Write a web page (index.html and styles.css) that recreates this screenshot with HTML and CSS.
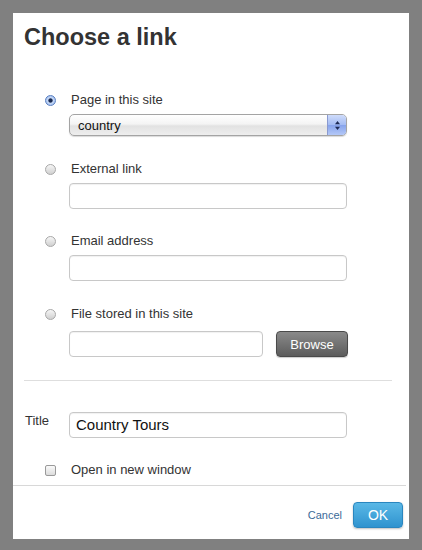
FILE: index.html
```html
<!DOCTYPE html>
<html>
<head>
<meta charset="utf-8">
<link rel="stylesheet" href="styles.css">
</head>
<body>
<div class="panel">
  <div class="content">
    <h1 class="title">Choose a link</h1>
    <div class="options">
      <div class="option">
        <label class="opt-label"><span class="radio checked"></span>Page in this site</label>
        <div class="select">
          <span class="select-value">country</span>
          <span class="select-arrows">
            <svg width="7" height="11" viewBox="0 0 7 11"><path d="M3.5 1 L6 4.2 H1 Z" fill="#1d2a55"/><path d="M3.5 10 L6 6.8 H1 Z" fill="#1d2a55"/></svg>
          </span>
        </div>
      </div>
      <div class="option">
        <label class="opt-label"><span class="radio"></span>External link</label>
        <div class="input"></div>
      </div>
      <div class="option">
        <label class="opt-label"><span class="radio"></span>Email address</label>
        <div class="input"></div>
      </div>
      <div class="option">
        <label class="opt-label"><span class="radio"></span>File stored in this site</label>
        <div class="file-row">
          <div class="input file-input"></div>
          <button class="browse">Browse</button>
        </div>
      </div>
    </div>
    <div class="divider"></div>
    <div class="title-row">
      <span class="title-label">Title</span>
      <div class="input title-input">Country Tours</div>
    </div>
    <label class="check-row"><span class="checkbox"></span>Open in new window</label>
  </div>
  <div class="footer">
    <a class="cancel">Cancel</a>
    <button class="ok">OK</button>
  </div>
</div>
</body>
</html>
```
FILE: styles.css
```css
html, body {
  margin: 0;
  padding: 0;
  background: #808080;
}
body {
  width: 422px;
  height: 550px;
  overflow: hidden;
  font-family: "Liberation Sans", Arial, sans-serif;
  color: #333;
}
.panel {
  margin: 13px 0 0 13px;
  width: 396px;
  height: 526px;
  background: #fff;
  display: flex;
  flex-direction: column;
}
.content {
  height: 473px;
  border-bottom: 1px solid #d8d8d8;
  width: 393px;
  box-sizing: border-box;
}
.title {
  margin: 10px 0 0 11px;
  font-size: 23.5px;
  line-height: 28px;
  font-weight: bold;
  color: #333;
}
.options {
  margin-top: 41px;
  display: flex;
  flex-direction: column;
  gap: 25px;
}
.option {
  display: flex;
  flex-direction: column;
  gap: 6px;
}
.opt-label {
  display: flex;
  align-items: center;
  font-size: 13px;
  line-height: 16px;
  padding-left: 32px;
  color: #333;
}
.radio {
  width: 11px;
  height: 11px;
  border-radius: 50%;
  border: 1px solid #a8a8a8;
  background: linear-gradient(#f6f6f6, #d0d0d0);
  margin-right: 15px;
  box-sizing: border-box;
  flex: none;
}
.radio.checked {
  border-color: #5a7fc0;
  background: radial-gradient(circle, #1a2a50 0, #1a2a50 1.7px, #c8daf7 2.6px, #8cb0ec 100%);
}
.select {
  margin-left: 56px;
  width: 278px;
  height: 22px;
  box-sizing: border-box;
  border: 1px solid #a4a4a4;
  border-radius: 5px;
  background: linear-gradient(#ffffff, #f4f4f4 45%, #e2e2e2 55%, #eeeeee);
  box-shadow: 0 1px 1px rgba(0,0,0,0.15);
  display: flex;
  align-items: center;
  justify-content: space-between;
  overflow: hidden;
}
.select-value {
  font-size: 13px;
  padding-left: 8px;
  color: #111;
}
.select-arrows {
  width: 18px;
  height: 100%;
  background: linear-gradient(#cfdcfb, #a3bbf3 50%, #86a3ec 51%, #b4c8f7);
  border-left: 1px solid #8a9ad0;
  display: flex;
  align-items: center;
  justify-content: center;
}
.input {
  margin-left: 56px;
  width: 278px;
  height: 26px;
  box-sizing: border-box;
  border: 1px solid #c8c8c8;
  border-radius: 4px;
  background: #fff;
  box-shadow: inset 0 1px 1px rgba(0,0,0,0.06);
}
.option:nth-child(3) { margin-top: -1px; }
.file-row {
  margin-left: 56px;
  margin-top: 3px;
  display: flex;
  gap: 13px;
}
.file-input {
  margin-left: 0;
  width: 194px;
}
.browse {
  width: 72px;
  height: 26px;
  border: 1px solid #4a4a4a;
  border-radius: 4px;
  background: linear-gradient(#8a8a8a, #5c5c5c);
  color: #fff;
  font-family: "Liberation Sans", Arial, sans-serif;
  font-size: 13px;
  padding: 0;
  box-shadow: 0 1px 1px rgba(0,0,0,0.2);
}
.divider {
  margin: 23px 0 0 11px;
  width: 368px;
  height: 1px;
  background: #dedede;
}
.title-row {
  margin-top: 31px;
  display: flex;
  align-items: flex-start;
}
.title-label {
  font-size: 13px;
  line-height: 16px;
  padding-left: 12px;
  width: 32px;
  margin-top: 1px;
}
.title-input {
  margin-left: 12px;
  font-size: 15px;
  line-height: 24px;
  padding-left: 6px;
  color: #111;
}
.check-row {
  margin-top: 24px;
  display: flex;
  align-items: center;
  font-size: 13px;
  line-height: 16px;
  padding-left: 32px;
}
.checkbox {
  width: 11px;
  height: 11px;
  box-sizing: border-box;
  border: 1px solid #9a9a9a;
  border-radius: 2px;
  background: linear-gradient(#fafafa, #dcdcdc);
  margin-right: 15px;
}
.footer {
  display: flex;
  justify-content: flex-end;
  align-items: center;
  padding: 16px 6px 0 0;
}
.cancel {
  font-size: 11px;
  color: #3b6a98;
  margin-right: 11px;
}
.ok {
  width: 50px;
  height: 26px;
  border: 1px solid #2a86bf;
  border-radius: 4px;
  background: linear-gradient(#5ab8e6, #2f93cf);
  color: #fff;
  font-family: "Liberation Sans", Arial, sans-serif;
  font-size: 14px;
  padding: 0;
  box-shadow: 0 1px 2px rgba(0,0,0,0.25);
}
```
